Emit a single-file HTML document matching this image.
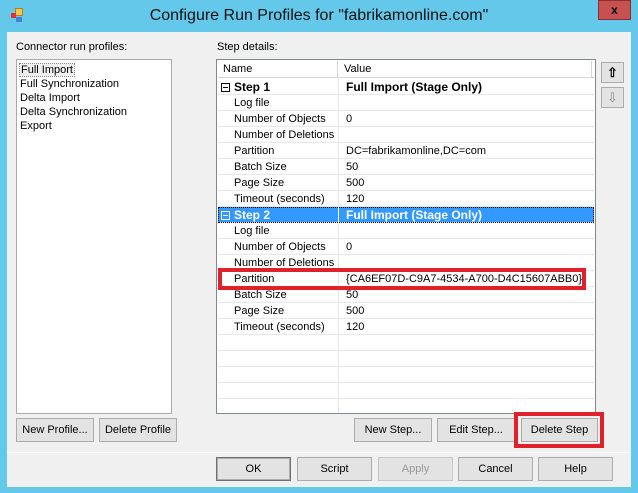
<!DOCTYPE html><html><head><style>
*{margin:0;padding:0;box-sizing:border-box}
body{width:638px;height:493px;background:#64c8ea;font-family:"Liberation Sans",sans-serif;font-size:11px;color:#000;position:relative;overflow:hidden}
.a{position:absolute}
.client{left:7px;top:32px;width:624px;height:455px;background:#f0f0f0}
.btn{position:absolute;background:#e3e3e3;border:1px solid #acacac;text-align:center;line-height:22px;height:24px;font-size:11px}
.btn.d{border:1px solid #707070;box-shadow:inset 0 0 0 1px #adadad}
.row{position:absolute;left:0;width:376px;height:16px;border-bottom:1px solid #e8e8e8;line-height:16px}
.row .n{position:absolute;left:16px}
.row .v{position:absolute;left:128px}
.row .sep{position:absolute;left:120px;top:0;width:1px;height:16px;background:#e8e8e8}
.step{font-weight:bold;font-size:12px}
.box{position:absolute;left:3px;top:4px;width:9px;height:9px;border:1px solid #000;font-size:9px}
.box:after{content:"";position:absolute;left:1px;top:3px;width:5px;height:1px;background:#000}
.sel{background:#3399ff;color:#fff}
.sel .box{border-color:#fff}.sel .box:after{background:#fff}
</style></head><body>
<div class="a" style="left:10px;top:7px;width:16px;height:16px">
<div class="a" style="left:5px;top:1px;width:8px;height:8px;background:#f2c84b;border:1px solid #b08020"></div>
<div class="a" style="left:1px;top:6px;width:5px;height:5px;background:#e03030"></div>
<div class="a" style="left:6px;top:10px;width:6px;height:5px;background:#4a7fd8"></div></div>
<div class="a" style="left:0;top:7px;width:638px;text-align:center;font-size:16px;color:#111">Configure Run Profiles for "fabrikamonline.com"</div>
<div class="a" style="left:598px;top:0;width:33px;height:20px;background:#c75050;border:1px solid #8a3030;color:#000;text-align:center;font-weight:bold;font-size:12px;line-height:18px">x</div>
<div class="a client"></div>
<div class="a" style="left:16px;top:41px">Connector run profiles:</div>
<div class="a" style="left:217px;top:41px">Step details:</div>
<div class="a" style="left:16px;top:59px;width:156px;height:355px;background:#fff;border:1px solid #aaa">
<div class="a" style="left:3px;top:3px;line-height:14px;">
<div><span style="outline:1px dotted #888;background:#f0f0f0;padding:0 1px">Full Import</span></div><div>Full Synchronization</div><div>Delta Import</div><div>Delta Synchronization</div><div>Export</div></div></div>
<div class="a" style="left:216px;top:59px;width:380px;height:355px;background:#fff;border:1px solid #828790;overflow:hidden">
<div class="a" style="left:1px;top:1px;width:376px;height:17px;background:#fff;border-bottom:1px solid #d5d5d5;line-height:16px">
<span class="a" style="left:5px">Name</span><span class="a" style="left:126px">Value</span>
<div class="a" style="left:119px;top:0;width:1px;height:17px;background:#d5d5d5"></div>
<div class="a" style="left:373px;top:0;width:1px;height:17px;background:#d5d5d5"></div></div>
<div class="a" style="left:1px;top:19px;width:376px;height:340px">
<div class="row step" style="top:0"><div class="box"></div><span class="n">Step 1</span><div class="sep"></div><span class="v">Full Import (Stage Only)</span></div>
<div class="row" style="top:16px"><span class="n">Log file</span><div class="sep"></div></div>
<div class="row" style="top:32px"><span class="n">Number of Objects</span><div class="sep"></div><span class="v">0</span></div>
<div class="row" style="top:48px"><span class="n">Number of Deletions</span><div class="sep"></div></div>
<div class="row" style="top:64px"><span class="n">Partition</span><div class="sep"></div><span class="v">DC=fabrikamonline,DC=com</span></div>
<div class="row" style="top:80px"><span class="n">Batch Size</span><div class="sep"></div><span class="v">50</span></div>
<div class="row" style="top:96px"><span class="n">Page Size</span><div class="sep"></div><span class="v">500</span></div>
<div class="row" style="top:112px"><span class="n">Timeout (seconds)</span><div class="sep"></div><span class="v">120</span></div>
<div class="row step sel" style="top:128px;outline:1px dotted #000;outline-offset:-1px"><div class="box"></div><span class="n">Step 2</span><div class="sep" style="background:#fff"></div><span class="v">Full Import (Stage Only)</span></div>
<div class="row" style="top:144px"><span class="n">Log file</span><div class="sep"></div></div>
<div class="row" style="top:160px"><span class="n">Number of Objects</span><div class="sep"></div><span class="v">0</span></div>
<div class="row" style="top:176px"><span class="n">Number of Deletions</span><div class="sep"></div></div>
<div class="row" style="top:192px"><span class="n">Partition</span><div class="sep"></div><span class="v">{CA6EF07D-C9A7-4534-A700-D4C15607ABB0}</span></div>
<div class="row" style="top:208px"><span class="n">Batch Size</span><div class="sep"></div><span class="v">50</span></div>
<div class="row" style="top:224px"><span class="n">Page Size</span><div class="sep"></div><span class="v">500</span></div>
<div class="row" style="top:240px"><span class="n">Timeout (seconds)</span><div class="sep"></div><span class="v">120</span></div>
<div class="row" style="top:256px"><div class="sep"></div></div>
<div class="row" style="top:272px"><div class="sep"></div></div>
<div class="row" style="top:288px"><div class="sep"></div></div>
<div class="row" style="top:304px"><div class="sep"></div></div>
<div class="row" style="top:320px"><div class="sep"></div></div>
</div></div>
<div class="a" style="left:218px;top:268px;width:368px;height:22px;border:4px solid #e0202a"></div>
<div class="btn" style="left:601px;top:62px;width:23px;height:21px;line-height:19px;font-size:13px;font-weight:bold">⇧</div>
<div class="btn" style="left:601px;top:87px;width:23px;height:21px;line-height:19px;font-size:13px;color:#888">⇩</div>
<div class="btn" style="left:16px;top:418px;width:78px">New Profile...</div>
<div class="btn" style="left:99px;top:418px;width:78px">Delete Profile</div>
<div class="btn" style="left:354px;top:418px;width:78px">New Step...</div>
<div class="btn" style="left:437px;top:418px;width:78px">Edit Step...</div>
<div class="btn" style="left:521px;top:418px;width:77px">Delete Step</div>
<div class="a" style="left:514px;top:412px;width:90px;height:36px;border:4px solid #e0202a"></div>
<div class="a" style="left:7px;top:452px;width:624px;height:1px;background:#a0a0a0;border-bottom:1px solid #fff"></div>
<div class="btn d" style="left:216px;top:457px;width:75px">OK</div>
<div class="btn" style="left:297px;top:457px;width:75px">Script</div>
<div class="btn" style="left:378px;top:457px;width:75px;color:#999;border-color:#c8c8c8">Apply</div>
<div class="btn" style="left:458px;top:457px;width:75px">Cancel</div>
<div class="btn" style="left:538px;top:457px;width:75px">Help</div>
</body></html>
